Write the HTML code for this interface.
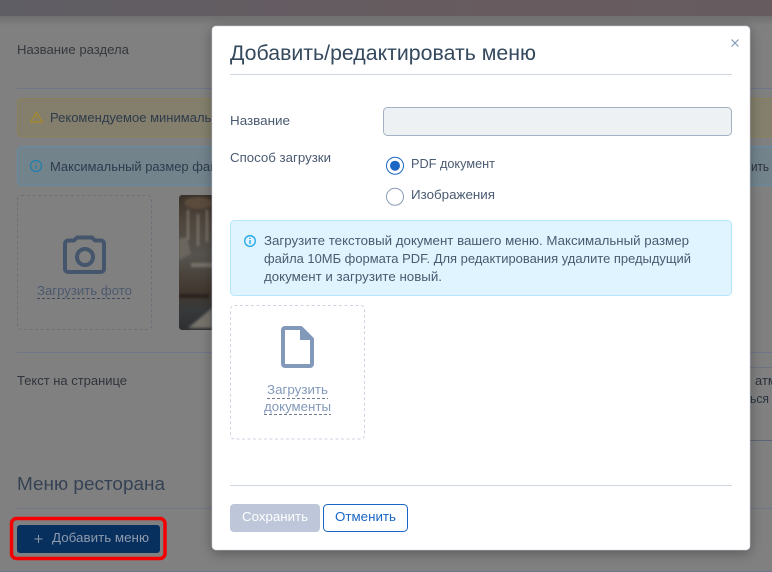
<!DOCTYPE html>
<html lang="ru">
<head>
<meta charset="utf-8">
<title>Добавить/редактировать меню</title>
<style>
html,body{margin:0;padding:0;width:772px;height:572px;overflow:hidden;background:#808080}
svg{display:block}
text{font-family:"Liberation Sans","DejaVu Sans",sans-serif;white-space:pre}
</style>
</head>
<body>
<svg xmlns="http://www.w3.org/2000/svg" width="772" height="572" viewBox="0 0 772 572">
<defs>
<linearGradient id="top" x1="0" x2="1" y1="0" y2="0"><stop offset="0" stop-color="#5f5e64"/><stop offset=".7" stop-color="#685b5f"/><stop offset="1" stop-color="#665c5f"/></linearGradient>
<linearGradient id="sh" x1="0" x2="0" y1="0" y2="1"><stop offset="0" stop-color="#6f6f6f"/><stop offset="1" stop-color="#808080"/></linearGradient>
<linearGradient id="photo" x1="0" x2="0" y1="0" y2="1"><stop offset="0" stop-color="#3a3129"/><stop offset=".2" stop-color="#4f463d"/><stop offset=".45" stop-color="#55534e"/><stop offset=".7" stop-color="#423830"/><stop offset=".85" stop-color="#37393a"/><stop offset="1" stop-color="#2d2f31"/></linearGradient>
<filter id="b"><feGaussianBlur stdDeviation="1.300"/></filter>
<filter id="ms" x="-10%" y="-10%" width="120%" height="120%"><feDropShadow dx="0" dy="3" stdDeviation="6" flood-color="#000" flood-opacity=".3"/></filter>
<clipPath id="pc"><rect x="179" y="195" width="40" height="135" rx="3"/></clipPath>
</defs>

<!-- background page -->
<rect width="772" height="572" fill="#808080"/>
<rect y="16" width="772" height="10" fill="url(#sh)"/>
<rect width="772" height="16" fill="url(#top)"/>
<text x="17" y="54" font-size="13" fill="#33393f" textLength="112" lengthAdjust="spacingAndGlyphs">Название раздела</text>
<rect x="17" y="88" width="755" height="1" fill="#71758a"/>

<rect x="17.500" y="98.500" width="770" height="38" rx="4" fill="#837f6c" stroke="#8a7f55"/>
<path d="M36.500 112l6 10h-12z" fill="none" stroke="#a8892a" stroke-width="1.200" stroke-linejoin="round"/>
<path d="M36.500 115.500v3.500M36.500 120v1" stroke="#a8892a" stroke-width="1"/>
<text x="50" y="122" font-size="13" fill="#2f3a4b" textLength="183" lengthAdjust="spacingAndGlyphs">Рекомендуемое минимальное</text>

<rect x="17.500" y="146.500" width="770" height="39" rx="4" fill="#72838c" stroke="#658ca5"/>
<circle cx="36" cy="166" r="5.500" fill="none" stroke="#1f7fae" stroke-width="1.200"/>
<path d="M36 165v4M36 162.500v1.300" stroke="#1f7fae" stroke-width="1.200"/>
<text x="50" y="171" font-size="13" fill="#2f3a4b" textLength="182" lengthAdjust="spacingAndGlyphs">Максимальный размер файла</text>
<text x="751" y="171" font-size="13" fill="#2a323e" textLength="18" lengthAdjust="spacingAndGlyphs">ить</text>

<rect x="17.500" y="195.500" width="134" height="134" rx="4" fill="none" stroke="#6a6f78" stroke-dasharray="3 2.500"/>
<path d="M68 240.500h6l3-3h15l3 3h6a3 3 0 0 1 3 3v25.500a3 3 0 0 1-3 3h-33a3 3 0 0 1-3-3v-25.500a3 3 0 0 1 3-3z" fill="none" stroke="#45556c" stroke-width="4" stroke-linejoin="round"/>
<circle cx="85" cy="257" r="8" fill="none" stroke="#45556c" stroke-width="4"/>
<text x="37" y="295" font-size="13" fill="#4c5a6f" textLength="95" lengthAdjust="spacingAndGlyphs">Загрузить фото</text>
<path d="M37 298.500h95" stroke="#3f4a5c" stroke-dasharray="3 2"/>

<!-- photo -->
<rect x="179" y="195" width="40" height="135" rx="3" fill="url(#photo)"/>
<g filter="url(#b)" clip-path="url(#pc)">
<path d="M188 210v30M198 214v32M207 210v32" stroke="#8d8980" stroke-width="1.500"/>
<ellipse cx="198" cy="203" rx="14" ry="6" fill="#5a4c3c"/>
<path d="M179 238h8l4 16-12 6z" fill="#6a665e"/>
<rect x="191" y="263" width="24" height="4" fill="#77736b"/>
<path d="M188 328l24-20v20z" fill="#75726a"/>
<path d="M179 294h30v4h-30z" fill="#2b241e"/>
</g>

<rect x="17" y="352" width="755" height="1" fill="#71758a"/>
<text x="17" y="385" font-size="13" fill="#2f343c" textLength="110" lengthAdjust="spacingAndGlyphs">Текст на странице</text>
<rect x="700" y="367" width="72" height="1" fill="#6d7282"/>
<rect x="700" y="440" width="72" height="1" fill="#5e6577"/>
<text x="755" y="385" font-size="13" fill="#2a323e">атм</text>
<text x="750" y="403" font-size="13" fill="#2a323e" textLength="19" lengthAdjust="spacingAndGlyphs">ься</text>

<text x="17" y="490" font-size="18" fill="#354254" textLength="148" lengthAdjust="spacingAndGlyphs">Меню ресторана</text>
<rect x="17" y="508" width="755" height="1" fill="#71758a"/>
<rect x="11.500" y="518.500" width="153.500" height="40" rx="5" fill="none" stroke="#f40000" stroke-width="3.500"/>
<rect x="17" y="525" width="143" height="28" rx="3" fill="#08305f"/>
<path d="M34.500 539h8M38.500 535v8" stroke="#8c98a8" stroke-width="1"/>
<text x="52" y="542" font-size="13" fill="#8e9aab" textLength="97" lengthAdjust="spacingAndGlyphs">Добавить меню</text>
<rect y="571" width="772" height="1" fill="#71758a"/>

<!-- modal -->
<rect x="212" y="26" width="538" height="524" rx="4" fill="#fff" stroke="#c6ccd8" stroke-width=".5" filter="url(#ms)"/>
<text x="230" y="60" font-size="21" fill="#34495e" textLength="306" lengthAdjust="spacingAndGlyphs">Добавить/редактировать меню</text>
<path d="M731.500 39.500l7 7M738.500 39.500l-7 7" stroke="#7f95b8" stroke-width="1.100"/>
<rect x="230" y="74" width="502" height="1" fill="#ced6e2"/>

<text x="230" y="125" font-size="13" fill="#4a5a70" textLength="60" lengthAdjust="spacingAndGlyphs">Название</text>
<rect x="383.500" y="107.500" width="348" height="28" rx="4" fill="#eef1f4" stroke="#a5b1c4"/>

<text x="230" y="162" font-size="13" fill="#4a5a70" textLength="101" lengthAdjust="spacingAndGlyphs">Способ загрузки</text>
<circle cx="395" cy="165.700" r="8.500" fill="#fff" stroke="#1a66c4" stroke-width="1"/>
<circle cx="395" cy="165.700" r="5" fill="#1a66c4"/>
<text x="411" y="168" font-size="13" fill="#4a5a70" textLength="84" lengthAdjust="spacingAndGlyphs">PDF документ</text>
<circle cx="395" cy="196.700" r="8.500" fill="#fff" stroke="#8a9bb5" stroke-width="1"/>
<text x="411" y="199" font-size="13" fill="#4a5a70" textLength="84" lengthAdjust="spacingAndGlyphs">Изображения</text>

<rect x="230.500" y="220.500" width="501" height="75" rx="4" fill="#dff4fe" stroke="#b5e6fb"/>
<circle cx="250" cy="241" r="5.300" fill="none" stroke="#1fa5e8" stroke-width="1.300"/>
<path d="M250 240v4M250 237.700v1.300" stroke="#1fa5e8" stroke-width="1.300"/>
<text x="264" y="245" font-size="12.500" fill="#4a5a70" textLength="425" lengthAdjust="spacingAndGlyphs">Загрузите текстовый документ вашего меню. Максимальный размер</text>
<text x="264" y="263" font-size="12.500" fill="#4a5a70" textLength="427" lengthAdjust="spacingAndGlyphs">файла 10МБ формата PDF. Для редактирования удалите предыдущий</text>
<text x="264" y="281" font-size="12.500" fill="#4a5a70" textLength="178" lengthAdjust="spacingAndGlyphs">документ и загрузите новый.</text>

<rect x="230.500" y="305.500" width="134" height="133.500" rx="4" fill="none" stroke="#ced4e2" stroke-dasharray="3 2.500"/>
<path d="M285 328h16l11 11v25a2 2 0 0 1-2 2h-25a2 2 0 0 1-2-2v-34a2 2 0 0 1 2-2z" fill="#fff" stroke="#8399ba" stroke-width="4" stroke-linejoin="round"/>
<path d="M300 327v13h13z" fill="#8399ba"/>
<text x="267" y="394" font-size="13" fill="#8399ba" textLength="61" lengthAdjust="spacingAndGlyphs">Загрузить</text>
<path d="M267 398.500h61" stroke="#6d7a90" stroke-dasharray="3 2"/>
<text x="264" y="411" font-size="13" fill="#8399ba" textLength="67" lengthAdjust="spacingAndGlyphs">документы</text>
<path d="M264 414.500h67" stroke="#6d7a90" stroke-dasharray="3 2"/>

<rect x="230" y="485" width="502" height="1" fill="#ced6e2"/>
<rect x="230" y="504" width="90" height="28" rx="4" fill="#bdc7d9"/>
<text x="242" y="521" font-size="13" fill="#fff" textLength="66" lengthAdjust="spacingAndGlyphs">Сохранить</text>
<rect x="323.500" y="504.500" width="84" height="27" rx="4" fill="#fff" stroke="#1a66c4"/>
<text x="335" y="521" font-size="13" fill="#1a66c4" textLength="61" lengthAdjust="spacingAndGlyphs">Отменить</text>
</svg>
</body>
</html>
